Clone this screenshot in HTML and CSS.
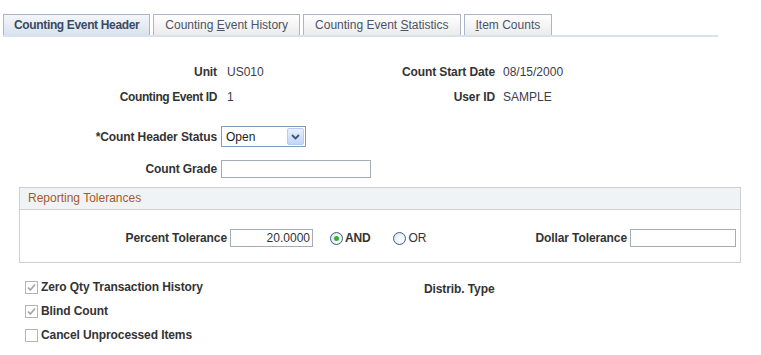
FILE: index.html
```html
<!DOCTYPE html>
<html>
<head>
  <link rel="stylesheet" href="styles.css">
</head>
<body>
  <div class="tabs">
    <div class="tab active">Counting Event Header</div>
    <div class="tab">Counting <u>E</u>vent History</div>
    <div class="tab">Counting Event <u>S</u>tatistics</div>
    <div class="tab"><u>I</u>tem Counts</div>
  </div>

  <div class="info">
    <div class="lbl">Unit</div>
    <div class="val">US010</div>
    <div class="lbl">Count Start Date</div>
    <div class="val val2">08/15/2000</div>
    <div class="lbl tight">Counting Event ID</div>
    <div class="val">1</div>
    <div class="lbl">User ID</div>
    <div class="val val2">SAMPLE</div>
  </div>

  <div class="field status-row">
    <div class="lbl">*Count Header Status</div>
    <div class="select">
      <span class="select-text">Open</span>
      <span class="select-btn">
        <svg width="9" height="6" viewBox="0 0 9 6"><path d="M1 1 L4.5 4.5 L8 1" fill="none" stroke="#3e5478" stroke-width="1.8"/></svg>
      </span>
    </div>
  </div>

  <div class="field grade-row">
    <div class="lbl">Count Grade</div>
    <div class="text grade"></div>
  </div>

  <div class="group">
    <div class="group-hd">Reporting Tolerances</div>
    <div class="group-bd">
      <div class="lbl pct-lbl">Percent Tolerance</div>
      <div class="text pct">20.0000</div>
      <label class="opt opt-and"><span class="radio checked"></span>AND</label>
      <label class="opt opt-or"><span class="radio"></span>OR</label>
      <div class="dollar">
        <div class="lbl">Dollar Tolerance</div>
        <div class="text dollar-input"></div>
      </div>
    </div>
  </div>

  <div class="bottom">
    <div class="checks">
      <div class="check"><span class="box"><svg width="11" height="11" viewBox="0 0 11 11"><path d="M2 5.5 L4.3 8 L9 2.5" fill="none" stroke="#a3a3a3" stroke-width="1.6"/></svg></span>Zero Qty Transaction History</div>
      <div class="check"><span class="box"><svg width="11" height="11" viewBox="0 0 11 11"><path d="M2 5.5 L4.3 8 L9 2.5" fill="none" stroke="#a3a3a3" stroke-width="1.6"/></svg></span>Blind Count</div>
      <div class="check"><span class="box"></span>Cancel Unprocessed Items</div>
    </div>
    <div class="lbl distrib">Distrib. Type</div>
  </div>
</body>
</html>
```

FILE: styles.css
```css
body {
  margin: 0;
  font-family: "Liberation Sans", Arial, sans-serif;
  font-size: 12px;
  color: #333333;
  background: #ffffff;
}

/* Tabs */
.tabs {
  display: flex;
  gap: 3px;
  width: 715px;
  margin: 14px 0 0 3px;
  border-bottom: 2px solid #d8e2ee;
}

.tab {
  height: 20px;
  line-height: 20px;
  padding: 0 11px;
  border: 1px solid #aab6c6;
  border-bottom: 0;
  background: linear-gradient(#ffffff, #ebebeb);
  color: #4a5468;
}

.tab.active {
  padding: 0 10px;
  background: linear-gradient(#f3f6fa, #d8e2ee);
  font-weight: bold;
  letter-spacing: -0.35px;
  color: #3b4a63;
}

.tab u {
  text-underline-offset: 1px;
}

/* Display fields */
.lbl {
  font-weight: bold;
  letter-spacing: -0.1px;
  text-align: right;
  white-space: nowrap;
}

.lbl.tight {
  letter-spacing: -0.4px;
}

.info {
  display: grid;
  grid-template-columns: 217px 160px 118px auto;
  grid-auto-rows: 25px;
  align-items: center;
  margin-top: 22px;
}

.val {
  padding-left: 10px;
  color: #3c3c4c;
}

.val2 {
  padding-left: 8px;
}

/* Editable fields */
.field {
  display: flex;
  align-items: center;
  gap: 4px;
}

.field .lbl {
  width: 217px;
}

.status-row {
  margin-top: 17px;
}

.grade-row {
  margin-top: 13px;
}

.select {
  display: flex;
  align-items: center;
  justify-content: space-between;
  width: 83px;
  height: 19px;
  border: 1px solid #7f9db9;
  background: #ffffff;
}

.select-text {
  padding-left: 4px;
  color: #222222;
}

.select-btn {
  display: flex;
  align-items: center;
  justify-content: center;
  width: 15px;
  height: 15px;
  margin-right: 1px;
  border: 1px solid #b8cbf0;
  border-radius: 2px;
  background: linear-gradient(#e9f0fd, #c3d4f7);
}

.text {
  height: 16px;
  line-height: 16px;
  border: 1px solid #a5acb2;
  background: #ffffff;
}

.grade {
  width: 148px;
}

/* Group box */
.group {
  width: 720px;
  margin: 9px 0 0 19px;
  border: 1px solid #cfcfcf;
}

.group-hd {
  height: 21px;
  line-height: 21px;
  padding-left: 8px;
  background: #f0f3f5;
  border-bottom: 1px solid #cfcfcf;
  color: #a35a2c;
}

.group-bd {
  display: flex;
  align-items: center;
  padding: 19px 0 15px;
}

.pct-lbl {
  width: 207px;
}

.pct {
  width: 79px;
  margin-left: 3px;
  padding-right: 2px;
  text-align: right;
  color: #333333;
}

.opt {
  display: flex;
  align-items: center;
  gap: 2px;
  font-weight: bold;
  letter-spacing: -0.2px;
}

.opt-and {
  margin-left: 17px;
}

.opt-or {
  margin-left: 23px;
  font-weight: normal;
  letter-spacing: 0;
}

.radio {
  position: relative;
  width: 11px;
  height: 11px;
  border: 1px solid #3f5d86;
  border-radius: 50%;
  background: radial-gradient(circle at 60% 60%, #ffffff, #d9e1ec);
}

.radio.checked:after {
  content: "";
  position: absolute;
  left: 3px;
  top: 3px;
  width: 5px;
  height: 5px;
  border-radius: 50%;
  background: #32b232;
}

.dollar {
  display: flex;
  align-items: center;
  gap: 3px;
  margin-left: auto;
  margin-right: 4px;
}

.dollar-input {
  width: 104px;
}

/* Check boxes */
.bottom {
  display: grid;
  grid-template-columns: 424px auto;
  margin-top: 12px;
}

.checks {
  padding-left: 25px;
}

.check {
  display: flex;
  align-items: center;
  gap: 3px;
  height: 24px;
  font-weight: bold;
  letter-spacing: -0.1px;
}

.box {
  display: flex;
  width: 11px;
  height: 11px;
  border: 1px solid #b7b6a8;
  background: #ffffff;
}

.distrib {
  text-align: left;
  line-height: 24px;
  padding-top: 2px;
}
```
